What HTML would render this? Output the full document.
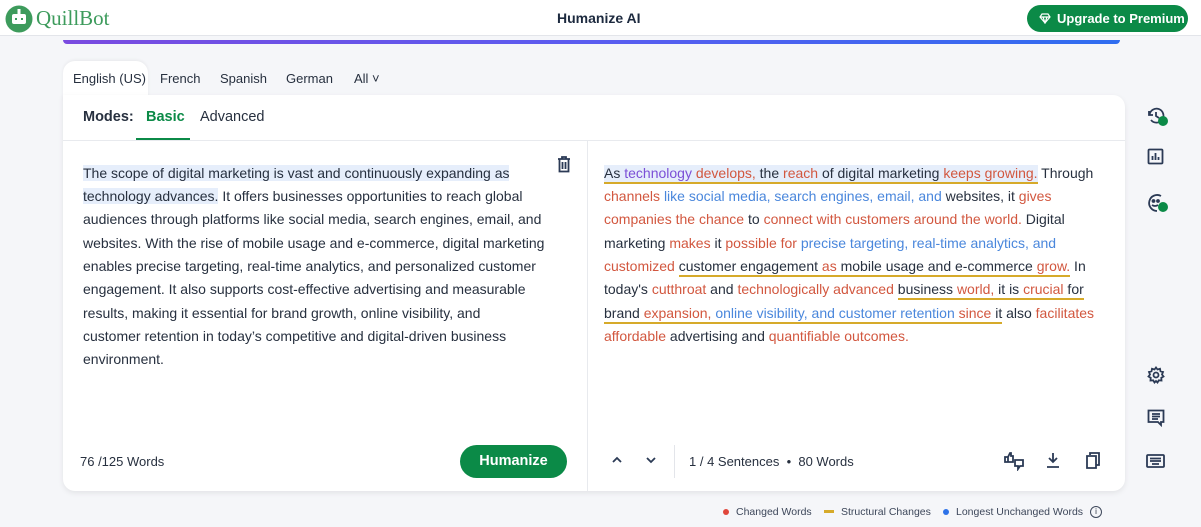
<!DOCTYPE html>
<html><head><meta charset="utf-8"><style>
*{margin:0;padding:0;box-sizing:border-box}
body{width:1201px;height:527px;background:#f5f6f9;font-family:"Liberation Sans",sans-serif;color:#27303f;position:relative;overflow:hidden}
.abs{position:absolute;white-space:nowrap}
.hdr{left:0;top:0;width:1201px;height:36px;background:#fff;border-bottom:1px solid #e3e5ea}
.line{position:absolute;white-space:nowrap;font-size:14px;line-height:23.3px}
.r{color:#d2573f}.b{color:#4a87dc}.p{color:#7b4fd6}
.u{border-bottom:2px solid #d6aa2a;padding-bottom:1px}
.hl{background:#e6eefb}
.ic{position:absolute;stroke:#2b3a55;fill:none;stroke-width:1.8}
</style></head><body>
<div class="abs hdr"></div>
<svg class="abs" style="left:5px;top:5px" width="28" height="28" viewBox="0 0 28 28"><circle cx="14" cy="14" r="13.5" fill="#3d9b5c"/><rect x="7" y="9" width="14" height="10" rx="2" fill="#fff"/><rect x="10" y="13" width="2" height="2" fill="#3d9b5c"/><rect x="16" y="13" width="2" height="2" fill="#3d9b5c"/><rect x="12.5" y="4" width="3" height="5" fill="#fff"/></svg>
<div class="abs" style="left:36px;top:6px;font-family:'Liberation Serif',serif;font-size:21px;color:#3d9b5c">QuillBot</div>
<div class="abs" style="left:557px;top:10px;font-size:14px;font-weight:bold;color:#1d2a3f">Humanize AI</div>
<div class="abs" style="left:1027px;top:5px;width:161px;height:27px;border-radius:14px;background:#0b8a47;color:#fff;font-size:13px;font-weight:bold;line-height:27px;padding-left:30px">Upgrade to Premium</div>
<svg class="abs" style="left:1039px;top:13px" width="12" height="11" viewBox="0 0 12 11"><path d="M1 4L3 1H9L11 4L6 10Z M1 4H11 M4 4L6 10L8 4" stroke="#fff" fill="none" stroke-width="1.2"/></svg>
<div class="abs" style="left:63px;top:40px;width:1057px;height:4px;border-radius:0 0 4px 4px;background:linear-gradient(90deg,#7a4be0,#5a5cf0,#2f6df0)"></div>
<div class="abs" style="left:63px;top:61px;width:85px;height:40px;background:#fff;border-radius:12px 12px 0 0;box-shadow:0 -1px 3px rgba(0,0,0,.06)"></div>
<div class="abs" style="left:73px;top:71px;font-size:13px;color:#27303f">English (US)</div>
<div class="abs" style="left:160px;top:71px;font-size:13px">French</div>
<div class="abs" style="left:220px;top:71px;font-size:13px">Spanish</div>
<div class="abs" style="left:286px;top:71px;font-size:13px">German</div>
<div class="abs" style="left:354px;top:71px;font-size:13px">All ˅</div>
<div class="abs" style="left:63px;top:95px;width:1062px;height:396px;background:#fff;border-radius:0 12px 12px 12px;box-shadow:0 2px 6px rgba(0,0,0,.08)"></div>
<div class="abs" style="left:63px;top:140px;width:1062px;height:1px;background:#e8eaee"></div>
<div class="abs" style="left:587px;top:141px;width:1px;height:350px;background:#e8eaee"></div>
<div class="abs" style="left:83px;top:109px;font-size:14.5px;font-weight:bold;color:#27303f">Modes:</div>
<div class="abs" style="left:146px;top:109px;font-size:14.5px;font-weight:bold;color:#0b8a47">Basic</div>
<div class="abs" style="left:136px;top:138px;width:54px;height:2px;background:#0b8a47"></div>
<div class="abs" style="left:200px;top:109px;font-size:14.5px;color:#27303f">Advanced</div>
<svg class="ic" style="left:556px;top:156px" width="16" height="17" viewBox="0 0 16 17"><path d="M2 3H14M6 3V1H10V3M3.5 3V15.5H12.5V3M6.5 6V13M9.5 6V13"/></svg>
<div class="line" style="left:83px;top:162px"><span class="hl">The scope of digital marketing is vast and continuously expanding as</span></div>
<div class="line" style="left:83px;top:185px"><span class="hl">technology advances.</span> It offers businesses opportunities to reach global</div>
<div class="line" style="left:83px;top:208px">audiences through platforms like social media, search engines, email, and</div>
<div class="line" style="left:83px;top:232px">websites. With the rise of mobile usage and e-commerce, digital marketing</div>
<div class="line" style="left:83px;top:255px">enables precise targeting, real-time analytics, and personalized customer</div>
<div class="line" style="left:83px;top:278px">engagement. It also supports cost-effective advertising and measurable</div>
<div class="line" style="left:83px;top:302px">results, making it essential for brand growth, online visibility, and</div>
<div class="line" style="left:83px;top:325px">customer retention in today’s competitive and digital-driven business</div>
<div class="line" style="left:83px;top:348px">environment.</div>
<div class="line" style="left:604px;top:162px"><span class="hl u">As <span class="p">technology</span> <span class="r">develops,</span> the <span class="r">reach</span> of digital marketing <span class="r">keeps growing.</span></span> Through</div>
<div class="line" style="left:604px;top:185px"><span class="r">channels</span> <span class="b">like social media, search engines, email, and</span> websites, it <span class="r">gives</span></div>
<div class="line" style="left:604px;top:208px"><span class="r">companies the chance</span> to <span class="r">connect with customers around the world.</span> Digital</div>
<div class="line" style="left:604px;top:232px">marketing <span class="r">makes</span> it <span class="r">possible for</span> <span class="b">precise targeting, real-time analytics, and</span></div>
<div class="line" style="left:604px;top:255px"><span class="r">customized</span> <span class="u">customer engagement <span class="r">as</span> mobile usage and e-commerce <span class="r">grow.</span></span> In</div>
<div class="line" style="left:604px;top:278px">today's <span class="r">cutthroat</span> and <span class="r">technologically advanced</span> <span class="u">business <span class="r">world,</span> it is <span class="r">crucial</span> for</span></div>
<div class="line" style="left:604px;top:302px"><span class="u">brand <span class="r">expansion,</span> <span class="b">online visibility, and customer retention</span> <span class="r">since</span> it</span> also <span class="r">facilitates</span></div>
<div class="line" style="left:604px;top:325px"><span class="r">affordable</span> advertising and <span class="r">quantifiable outcomes.</span></div>
<div class="abs" style="left:80px;top:454px;font-size:13px">76 /125 Words</div>
<div class="abs" style="left:460px;top:445px;width:107px;height:33px;border-radius:17px;background:#0b8a47;color:#fff;font-size:14.5px;font-weight:bold;text-align:center;line-height:33px">Humanize</div>
<svg class="ic" style="left:611px;top:456px" width="12" height="8" viewBox="0 0 12 8"><path d="M2 6L6 2L10 6"/></svg>
<svg class="ic" style="left:645px;top:456px" width="12" height="8" viewBox="0 0 12 8"><path d="M2 2L6 6L10 2"/></svg>
<div class="abs" style="left:674px;top:445px;width:1px;height:33px;background:#e3e5ea"></div>
<div class="abs" style="left:689px;top:454px;font-size:13px;color:#27303f">1 / 4 Sentences &nbsp;•&nbsp; 80 Words</div>
<svg class="ic" style="left:1003px;top:451px" width="22" height="20" viewBox="0 0 22 20" stroke-width="1.6"><path d="M2 6H5V11H2ZM5 6L7 2H8V5H10V11H5 M12 9H20V15H17L15 18V15H12Z"/></svg>
<svg class="ic" style="left:1045px;top:451px" width="16" height="19" viewBox="0 0 16 19"><path d="M8 2V11M4 7L8 11L12 7M2 16H14"/></svg>
<svg class="ic" style="left:1084px;top:451px" width="18" height="19" viewBox="0 0 18 19"><path d="M6 4V2H15V14H12M3 5H12V17H3Z"/></svg>
<div class="abs" style="left:723px;top:509px;width:6px;height:6px;border-radius:3px;background:#e0463b"></div>
<div class="abs" style="left:736px;top:506px;font-size:10.5px;color:#3d475a">Changed Words</div>
<div class="abs" style="left:824px;top:510px;width:10px;height:3px;background:#d6aa2a"></div>
<div class="abs" style="left:841px;top:506px;font-size:10.5px;color:#3d475a">Structural Changes</div>
<div class="abs" style="left:943px;top:509px;width:6px;height:6px;border-radius:3px;background:#2d72e8"></div>
<div class="abs" style="left:956px;top:506px;font-size:10.5px;color:#3d475a">Longest Unchanged Words</div>
<div class="abs" style="left:1090px;top:506px;width:12px;height:12px;border:1.2px solid #3d475a;border-radius:6px;font-size:8px;text-align:center;line-height:10px">i</div>
<svg class="ic" style="left:1146px;top:106px" width="24" height="24" viewBox="0 0 24 24"><path d="M3 5V9H7M3.5 9A7 7 0 1 1 5 14M10 6V10L13 12"/><circle cx="17" cy="15" r="5" fill="#0b8a47" stroke="none"/></svg>
<svg class="ic" style="left:1147px;top:148px" width="17" height="17" viewBox="0 0 17 17"><rect x="1.5" y="1.5" width="14" height="14" rx="1"/><path d="M5.5 12V8M8.5 12V5M11.5 12V9"/></svg>
<svg class="ic" style="left:1146px;top:192px" width="24" height="24" viewBox="0 0 24 24"><path d="M15 4A8 8 0 1 0 11 19"/><circle cx="7.5" cy="9" r="1" fill="#2b3a55"/><circle cx="12" cy="9" r="1" fill="#2b3a55"/><path d="M6 13Q9 15 12 13"/><circle cx="17" cy="15" r="5" fill="#0b8a47" stroke="none"/></svg>
<svg class="ic" style="left:1147px;top:366px" width="18" height="18" viewBox="0 0 18 18"><circle cx="9" cy="9" r="2.5"/><path d="M9 1.5L10.5 3.5L13 2.8L13.5 5.3L16 6L15 8.5L16.5 10.5L14.3 11.8L14.5 14.5L11.8 14.3L10.5 16.5L9 15L7.5 16.5L6.2 14.3L3.5 14.5L3.7 11.8L1.5 10.5L3 8.5L2 6L4.5 5.3L5 2.8L7.5 3.5Z"/></svg>
<svg class="ic" style="left:1147px;top:409px" width="18" height="18" viewBox="0 0 18 18"><path d="M1.5 1.5H16.5V13H14V16L11 13H1.5Z M5 5H13M5 7.5H13M5 10H11"/></svg>
<svg class="ic" style="left:1146px;top:454px" width="19" height="14" viewBox="0 0 19 14" stroke-width="1.5"><rect x="1" y="1" width="17" height="12" rx="1"/><path d="M4 4.5H15M4 7H15M6 10H13"/></svg>
</body></html>
